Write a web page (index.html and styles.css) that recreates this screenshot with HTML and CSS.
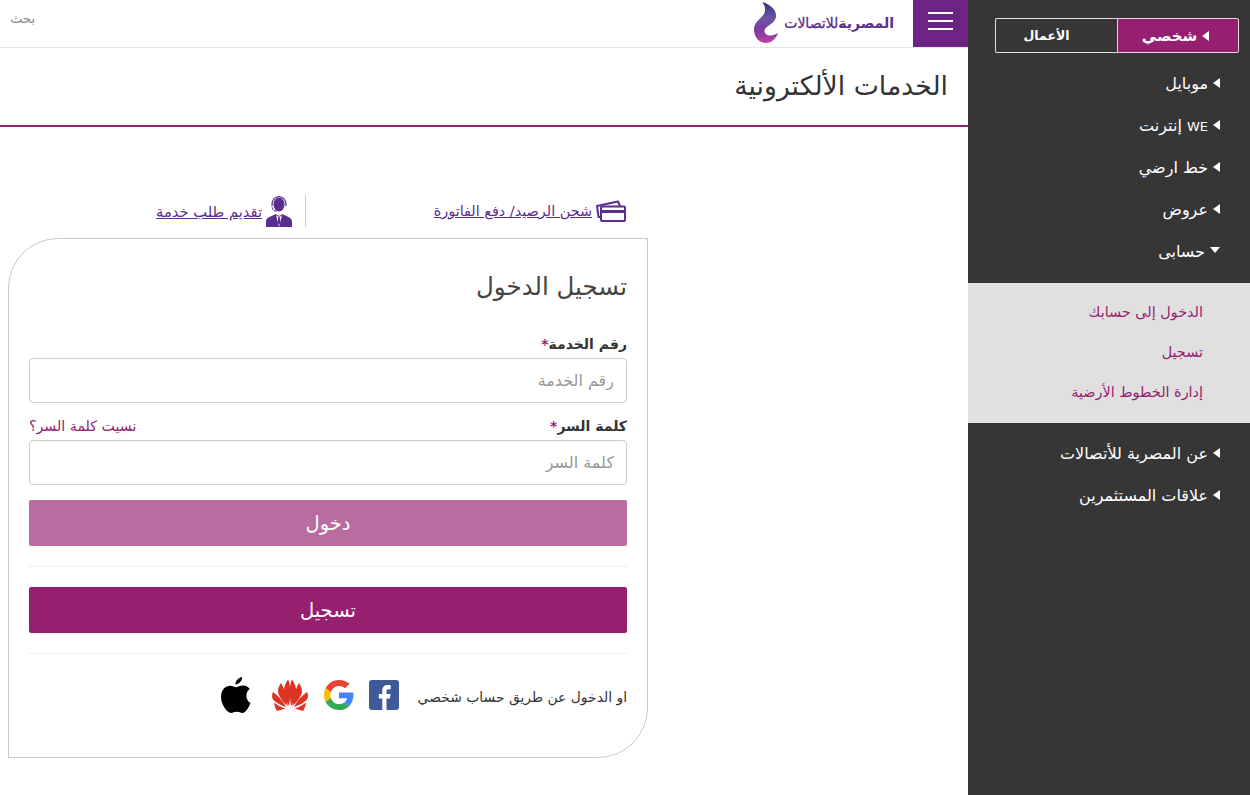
FILE: index.html
```html
<!DOCTYPE html>
<html lang="ar" dir="rtl">
<head>
    <meta charset="UTF-8">
    <title>الخدمات الألكترونية</title>
    <link rel="stylesheet" href="styles.css">
</head>
<body>
    <!-- Side menu -->
    <nav class="sidebar">
        <div class="segment">
            <a class="segment-btn active"><span class="caret-left"></span>شخصي</a>
            <a class="segment-btn">الأعمال</a>
        </div>
        <ul class="menu">
            <li><span class="caret-left"></span>موبايل</li>
            <li><span class="caret-left"></span><span><span class="latin">WE</span> إنترنت</span></li>
            <li><span class="caret-left"></span>خط ارضي</li>
            <li><span class="caret-left"></span>عروض</li>
            <li><span class="caret-down"></span>حسابى</li>
        </ul>
        <ul class="submenu">
            <li>الدخول إلى حسابك</li>
            <li>تسجيل</li>
            <li>إدارة الخطوط الأرضية</li>
        </ul>
        <ul class="menu menu-lower">
            <li><span class="caret-left"></span>عن المصرية للأتصالات</li>
            <li><span class="caret-left"></span>علاقات المستثمرين</li>
        </ul>
    </nav>

    <div class="page">
        <header class="topbar">
            <button class="burger"><span></span><span></span><span></span></button>
            <div class="logo">
                <span class="logo-text">المصرية<span class="logo-light">للاتصالات</span></span>
                <svg class="logo-mark" width="24" height="42" viewBox="0 0 24 42">
                    <defs>
                        <linearGradient id="swirl" x1="0.5" y1="0" x2="0.5" y2="1">
                            <stop offset="0" stop-color="#34307f"/>
                            <stop offset="0.4" stop-color="#6f55a8"/>
                            <stop offset="0.7" stop-color="#7d3a9c"/>
                            <stop offset="1" stop-color="#b8449f"/>
                        </linearGradient>
                    </defs>
                    <path fill="url(#swirl)" d="M8 0C16 2 23 8 22 15C21 21 14 23 11 27C9 31 13 34 17 33.500C20 33 22 32 24 31C22 37 17 41 12 41C5 41 0 35 0 27C0 20 7 17 10 12C12 8 11 3 8 0Z"/>
                </svg>
            </div>
            <div class="search">بحث</div>
        </header>

        <div class="title-bar">
            <h1>الخدمات الألكترونية</h1>
        </div>

        <div class="quick-links">
            <div class="quick-link first">
                <svg width="30" height="22" viewBox="0 0 30 22" fill="none" stroke="#5b2d8e" stroke-width="2" stroke-linejoin="round">
                    <path d="M4 17H2.500L1 6L22 1.500L24 6"/>
                    <rect x="5" y="6.500" width="24" height="14.500" rx="1"/>
                    <path d="M5 11.500H29" stroke-width="3"/>
                </svg>
                <a href="#">شحن الرصيد/ دفع الفاتورة</a>
            </div>
            <div class="quick-link second">
                <svg width="26" height="31" viewBox="0 0 26 31">
                    <ellipse cx="13" cy="8.500" rx="5.500" ry="7" fill="#5b2d8e"/>
                    <path d="M6 10C5 -2.500 21 -2.500 20 10" fill="none" stroke="#5b2d8e" stroke-width="1.200"/>
                    <path d="M6 11C6.500 14 8.500 15.500 11 15" fill="none" stroke="#5b2d8e" stroke-width="1"/>
                    <path d="M0 31V25.500C0 21.500 5 20.500 9.500 18L13 20L16.500 18C21 20.500 26 21.500 26 25.500V31Z" fill="#5b2d8e"/>
                    <path d="M10 19L13 31L16 19L14.500 20.500H11.500Z" fill="#fff"/>
                    <path d="M12.200 21H13.800L14.300 27L13 29L11.700 27Z" fill="#5b2d8e"/>
                </svg>
                <a href="#">تقديم طلب خدمة</a>
            </div>
        </div>

        <form class="login-card">
            <h2>تسجيل الدخول</h2>

            <label class="field-label">رقم الخدمة<span class="req">*</span></label>
            <input class="field" type="text" placeholder="رقم الخدمة">

            <div class="label-row">
                <label class="field-label">كلمة السر<span class="req">*</span></label>
                <a class="forgot" href="#">نسيت كلمة السر؟</a>
            </div>
            <input class="field" type="password" placeholder="كلمة السر">

            <button class="btn btn-disabled" type="button">دخول</button>
            <hr>
            <button class="btn" type="button">تسجيل</button>
            <hr>

            <div class="social">
                <span class="social-text">او الدخول عن طريق حساب شخصي</span>
                <svg width="30" height="30" viewBox="0 0 30 30">
                    <rect width="30" height="30" rx="3" fill="#3f5a98"/>
                    <path fill="#fff" d="M20.500 30V18.500H24L24.500 14H20.500V11.300C20.500 10 20.900 9.200 22.700 9.200H24.700V5.200C24.300 5.100 23.100 5 21.600 5C18.500 5 16.300 6.900 16.300 10.400V14H12.800V18.500H16.300V30Z" transform="translate(-3 0)"/>
                </svg>
                <svg width="30" height="30" viewBox="0 0 48 48">
                    <path fill="#EA4335" d="M24 9.500c3.900 0 7.100 1.300 9.700 3.800l7.200-7.200C36.500 2 30.800 0 24 0 14.600 0 6.500 5.400 2.600 13.200l8.400 6.500C13 13.700 18 9.500 24 9.500z"/>
                    <path fill="#4285F4" d="M47 24.500c0-1.600-.1-3.100-.4-4.500H24v9h13c-.6 3-2.300 5.500-4.800 7.200l7.700 6C44.400 38 47 31.800 47 24.500z"/>
                    <path fill="#FBBC05" d="M11 28.700c-.5-1.500-.8-3-.8-4.700s.3-3.200.8-4.700l-8.400-6.500C.9 16.300 0 20 0 24s.9 7.700 2.600 11.200z"/>
                    <path fill="#34A853" d="M24 48c6.500 0 11.900-2.100 15.900-5.800l-7.700-6c-2.100 1.400-4.900 2.300-8.200 2.300-6 0-11-4.100-12.900-9.800l-8.500 6.500C6.500 42.600 14.600 48 24 48z"/>
                </svg>
                <svg width="38" height="33" viewBox="0 0 38 33" fill="#dc3323">
                    <path d="M18 27C14 20 12.500 14 13 10C13.500 6 15.500 2.500 17 0.500C19.500 5 20 15 18 27Z"/>
                    <path d="M20 27C24 20 25.500 14 25 10C24.500 6 22.500 2.500 21 0.500C18.500 5 18 15 20 27Z"/>
                    <path d="M16.500 27C10.500 21.500 7 16 7 12C7 9 8.500 6 10 4C13 9 16 17 16.500 27Z"/>
                    <path d="M21.500 27C27.500 21.500 31 16 31 12C31 9 29.500 6 28 4C25 9 22 17 21.500 27Z"/>
                    <path d="M15 28C9 26 3 22.500 1.500 19.500C0.700 17.500 1 15 2 13C7 16.500 12 21.500 15 28Z"/>
                    <path d="M23 28C29 26 35 22.500 36.500 19.500C37.300 17.500 37 15 36 13C31 16.500 26 21.500 23 28Z"/>
                    <path d="M3 23.500C6 26 10 28.500 14.500 29.500L6 32C4.500 30 3.500 27 3 23.500Z"/>
                    <path d="M35 23.500C32 26 28 28.500 23.500 29.500L32 32C33.500 30 34.500 27 35 23.500Z"/>
                </svg>
                <svg class="apple" width="30" height="36" viewBox="0 0 30 36" fill="#000">
                    <path d="M21 0C21.300 3.500 18 7.500 14.500 7.500C14 4 17.500 0.500 21 0Z"/>
                    <path d="M29.500 26C28 30 24.500 36 21.500 36C19.500 36 18.500 34.800 15.800 34.800C13 34.800 12 36 10 36C6 36 0 27.500 0 20C0 12.500 4.800 8.700 9.300 8.700C11.700 8.700 13.700 10.200 15.200 10.200C16.600 10.200 19 8.500 21.800 8.500C23 8.500 26.500 8.800 28.800 12C24 15 24.500 23.500 29.500 26Z"/>
                </svg>
            </div>
        </form>
    </div>
</body>
</html>
```

FILE: styles.css
```css
/* Base */
* {
    box-sizing: border-box;
}

html, body {
    height: 100%;
}

body {
    margin: 0;
    display: flex;
    font-family: "DejaVu Sans", sans-serif;
    background-color: #fff;
    color: #333;
    overflow: hidden;
}

a {
    color: inherit;
}

/* Sidebar */
.sidebar {
    width: 282px;
    height: 795px;
    flex-shrink: 0;
    background-color: #363636;
    color: #fff;
    padding-top: 18px;
}

.segment {
    display: flex;
    margin: 0 11px 0 11px;
    height: 35px;
}

.segment-btn {
    width: 122px;
    display: flex;
    align-items: center;
    justify-content: center;
    gap: 5px;
    border: 1px solid #ddd;
    font-size: 14px;
    font-weight: bold;
    border-radius: 0 2px 2px 0;
}

.segment-btn:last-child {
    border-radius: 2px 0 0 2px;
    border-right: none;
    padding-right: 20px;
    font-size: 12.500px;
}

.segment-btn.active {
    background-color: #96206f;
    padding-right: 5px;
    font-size: 15px;
}

.caret-left {
    display: inline-block;
    width: 0;
    height: 0;
    border-top: 5px solid transparent;
    border-bottom: 5px solid transparent;
    border-right: 7px solid #fff;
    flex-shrink: 0;
}

.caret-down {
    display: inline-block;
    width: 0;
    height: 0;
    border-left: 5.500px solid transparent;
    border-right: 5.500px solid transparent;
    border-top: 6px solid #fff;
    margin-bottom: 2px;
}

.menu {
    list-style: none;
    margin: 0;
    padding: 9px 30px 0 0;
    font-size: 16px;
}

.menu li {
    height: 42px;
    display: flex;
    align-items: center;
    gap: 5px;
}

.latin {
    font-size: 13px;
}

.menu-lower {
    padding-top: 9px;
}

.submenu {
    list-style: none;
    margin: 11px 0 0;
    padding: 9px 47px 0 0;
    height: 140px;
    background-color: #e0e0e0;
    color: #96206f;
    font-size: 14.400px;
}

.submenu li {
    height: 40px;
    display: flex;
    align-items: center;
}

/* Main column */
.page {
    width: 968px;
}

.topbar {
    height: 48px;
    display: flex;
    align-items: flex-start;
    border-bottom: 1px solid #e7e7e7;
}

.burger {
    width: 55px;
    height: 47px;
    border: none;
    padding: 12px 15px 0 15px;
    background-color: #6d2385;
    display: flex;
    flex-direction: column;
    gap: 6px;
}

.burger span {
    display: block;
    width: 25px;
    height: 2px;
    background-color: #fff;
}

.logo {
    display: flex;
    align-items: center;
    gap: 6px;
    margin-right: 19px;
    height: 46px;
}

.logo-text {
    color: #5b2d8e;
    font-size: 14px;
    font-weight: bold;
    letter-spacing: -1px;
}

.logo-light {
    font-weight: normal;
    -webkit-text-stroke: 0.300px #5b2d8e;
}

.search {
    margin-right: auto;
    padding: 11px 11px 0 0;
    width: 46px;
    font-size: 13px;
    color: #888;
}

.title-bar {
    height: 79px;
    padding: 21px 20px 0 0;
    border-bottom: 2px solid #96206f;
}

.title-bar h1 {
    margin: 0;
    font-size: 26.700px;
    font-weight: normal;
    line-height: 34px;
    color: #333;
}

.quick-links {
    display: flex;
    margin: 68px 320px 0 0;
    height: 32px;
    width: 640px;
}

.quick-link {
    display: flex;
    align-items: center;
    gap: 4px;
    padding-right: 13px;
    font-size: 14.400px;
    color: #5b2d8e;
}

.quick-link.first {
    width: 343px;
    padding-right: 22px;
    border-left: 1px solid #ccc;
}

.quick-link.second {
    font-size: 14.700px;
}

/* Login card */
.login-card {
    width: 640px;
    height: 520px;
    margin: 11px 320px 0 0;
    padding: 28px 20px 0;
    border: 1px solid #c8c8c8;
    border-radius: 0 0 50px 0;
    border-top-left-radius: 50px;
}

.login-card h2 {
    margin: 0 0 27px;
    font-size: 24.500px;
    font-weight: normal;
    line-height: 40px;
    color: #444;
}

.field-label {
    display: block;
    font-size: 14px;
    font-weight: bold;
    line-height: 20px;
    color: #333;
    margin-bottom: 4px;
}

.req {
    color: #96206f;
}

.label-row {
    display: flex;
    justify-content: space-between;
    align-items: flex-start;
    margin-top: 13px;
}

.forgot {
    font-size: 14.200px;
    line-height: 20px;
    color: #96206f;
    text-decoration: none;
}

.field {
    display: block;
    width: 100%;
    height: 45px;
    padding: 0 12px;
    border: 1px solid #ccc;
    border-radius: 4px;
    font-family: inherit;
    font-size: 16px;
    background-color: #fff;
}

.field::placeholder {
    color: #999;
}

.btn {
    display: block;
    width: 100%;
    height: 46px;
    border: none;
    border-radius: 2px;
    background-color: #96206f;
    color: #fff;
    font-family: inherit;
    font-size: 19.500px;
}

.btn-disabled {
    margin-top: 15px;
    background-color: #b96c9f;
}

.login-card hr {
    margin: 20px 0;
    border: none;
    border-top: 1px solid #eee;
}

.social {
    display: flex;
    align-items: center;
    gap: 15px;
    margin-top: -1px;
    height: 44px;
}

.social-text {
    font-size: 13.900px;
    color: #333;
    margin-left: 4px;
    padding-top: 4px;
}

.apple {
    margin-right: 5px;
}
```
